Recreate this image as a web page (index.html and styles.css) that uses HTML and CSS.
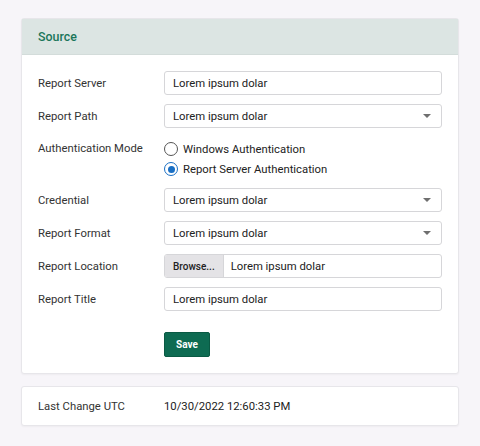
FILE: index.html
```html
<!DOCTYPE html>
<html lang="en">
<head>
  <meta charset="UTF-8" />
  <meta name="viewport" content="width=device-width, initial-scale=1.0" />
  <title>Report Source</title>
  <link rel="stylesheet" href="styles.css">
</head>
<body>

  <!-- Source settings -->
  <div class="card">
    <div class="card-header">Source</div>
    <form class="card-body">
      <div class="row">
        <label class="label">Report Server</label>
        <div class="field"><input class="input" type="text" value="Lorem ipsum dolar"></div>
      </div>
      <div class="row">
        <label class="label">Report Path</label>
        <div class="field">
          <div class="select">Lorem ipsum dolar<span class="caret"></span></div>
        </div>
      </div>
      <div class="row row-radio">
        <label class="label">Authentication Mode</label>
        <div class="field radios">
          <label class="radio"><span class="dot"></span>Windows Authentication</label>
          <label class="radio"><span class="dot checked"></span>Report Server Authentication</label>
        </div>
      </div>
      <div class="row">
        <label class="label">Credential</label>
        <div class="field">
          <div class="select">Lorem ipsum dolar<span class="caret"></span></div>
        </div>
      </div>
      <div class="row">
        <label class="label">Report Format</label>
        <div class="field">
          <div class="select">Lorem ipsum dolar<span class="caret"></span></div>
        </div>
      </div>
      <div class="row">
        <label class="label">Report Location</label>
        <div class="field">
          <div class="file"><span class="browse">Browse...</span><span class="file-name">Lorem ipsum dolar</span></div>
        </div>
      </div>
      <div class="row">
        <label class="label">Report Title</label>
        <div class="field"><input class="input" type="text" value="Lorem ipsum dolar"></div>
      </div>
      <div class="row actions">
        <span class="label"></span>
        <button class="btn" type="button">Save</button>
      </div>
    </form>
  </div>

  <!-- Audit info -->
  <div class="card info">
    <div class="row">
      <span class="label">Last Change UTC</span>
      <span class="value">10/30/2022 12:60:33 PM</span>
    </div>
  </div>

</body>
</html>
```

FILE: styles.css
```css
* {
  margin: 0;
  padding: 0;
  box-sizing: border-box;
}

body {
  background: #f7f5f9;
  font-family: Roboto, 'Liberation Sans', sans-serif;
  font-size: 11.3px;
  color: #333;
  padding: 18px 21px;
}

.card {
  background: #fff;
  border: 1px solid #e7e6ea;
  border-radius: 3px;
  box-shadow: 0 1px 2px rgba(0, 0, 0, 0.04);
}

.card-header {
  height: 36px;
  display: flex;
  align-items: center;
  padding: 0 16px;
  background: #dce5e3;
  border-bottom: 1px solid #d3dcda;
  color: #1a765a;
  font-size: 12.4px;
  font-weight: 500;
}

.card-body {
  display: flex;
  flex-direction: column;
  gap: 9px;
  padding: 16px 16px 16px;
}

.row {
  display: flex;
  align-items: center;
}

.label {
  width: 126px;
  flex-shrink: 0;
}

.field {
  flex: 1;
}

.input,
.select,
.file {
  width: 100%;
  height: 24px;
  border: 1px solid #d6d6d9;
  border-radius: 3px;
  background: #fff;
  font: inherit;
  color: #222;
  padding: 0 8px;
  display: flex;
  align-items: center;
}

.select {
  justify-content: space-between;
}

.caret {
  width: 0;
  height: 0;
  border-left: 4px solid transparent;
  border-right: 4px solid transparent;
  border-top: 4px solid #6f6f6f;
  margin-right: 2px;
}

.row-radio {
  align-items: flex-start;
  padding-top: 2px;
}

.row-radio .label {
  line-height: 20px;
}

.radios {
  display: flex;
  flex-direction: column;
}

.radio {
  display: flex;
  align-items: center;
  gap: 5px;
  height: 20px;
  color: #222;
}

.dot {
  width: 14px;
  height: 14px;
  border: 1.5px solid #555;
  border-radius: 50%;
  display: flex;
  align-items: center;
  justify-content: center;
}

.dot.checked {
  border-color: #1a6fc4;
}

.dot.checked::after {
  content: '';
  width: 7px;
  height: 7px;
  border-radius: 50%;
  background: #1a6fc4;
}

.file {
  padding: 0;
  overflow: hidden;
}

.browse {
  height: 100%;
  display: flex;
  align-items: center;
  padding: 0 8px;
  background: #e4e3e6;
  border-right: 1px solid #d6d6d9;
  font-size: 10px;
  font-weight: 500;
  color: #222;
}

.file-name {
  padding-left: 7px;
}

.actions {
  margin-top: 12px;
}

.btn {
  height: 25px;
  padding: 0 11px;
  background: #0e6b52;
  color: #fff;
  border: 1px solid #0a5a44;
  border-radius: 2px;
  font-family: inherit;
  font-size: 10px;
  font-weight: 700;
  cursor: pointer;
}

.info {
  margin-top: 12px;
  height: 40px;
  display: flex;
  align-items: center;
  padding: 0 16px;
}

.value {
  color: #222;
}
```
